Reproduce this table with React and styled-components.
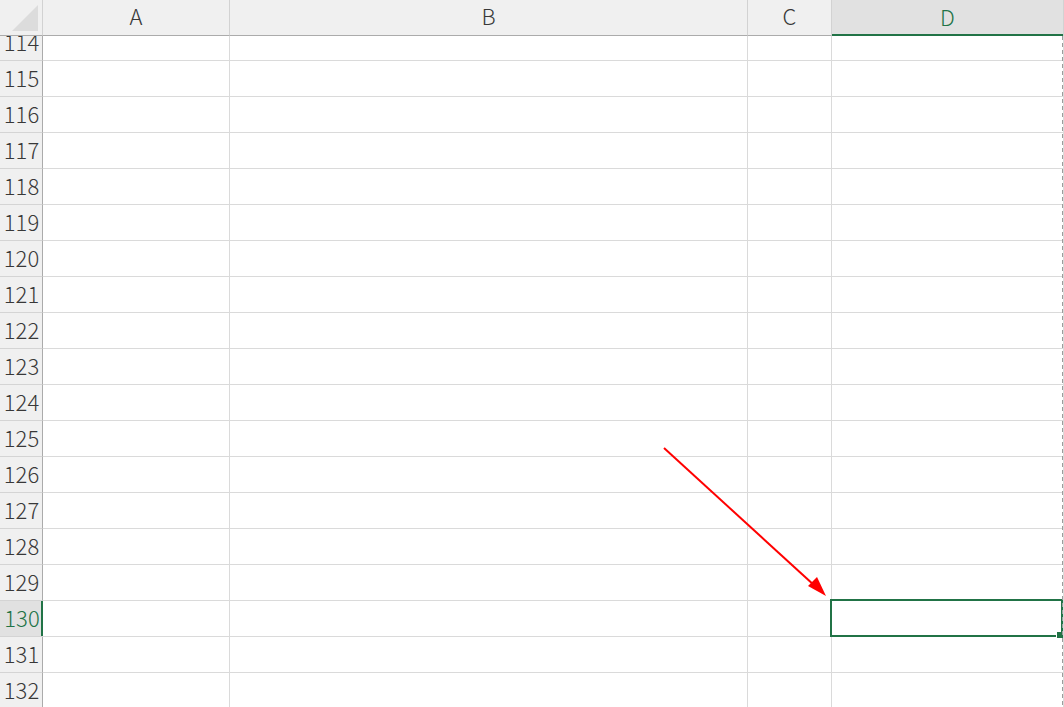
import React from 'react'
import styled, { createGlobalStyle, css } from 'styled-components'

const GlobalStyle = createGlobalStyle`
  html, body {
    margin: 0;
    padding: 0;
    background: #ffffff;
    overflow: hidden;
  }
`

const COLS = '43px 187px 518px 84px 1fr'
const GREEN = '#217346'

const Sheet = styled.div`
  position: relative;
  width: 1064px;
  height: 707px;
  overflow: hidden;
  background: #ffffff;
  font-family: "Noto Sans CJK JP", "Noto Sans", sans-serif;
  font-weight: 300;
  line-height: 24px;
`

const HeaderRow = styled.div`
  position: relative;
  z-index: 2;
  display: grid;
  grid-template-columns: ${COLS};
  grid-template-rows: 36px;
  height: 36px;
  background: #f0f0f0;
`

const Corner = styled.div`
  position: relative;
  box-sizing: border-box;
  border-right: 1px solid #d2d2d2;
  border-bottom: 1px solid #ababab;
  &::before {
    content: '';
    position: absolute;
    left: 12px;
    top: 5px;
    width: 26px;
    height: 26px;
    background: #dcdcdc;
    clip-path: polygon(100% 0, 100% 100%, 0 100%);
  }
`

const ColHead = styled.div`
  box-sizing: border-box;
  display: flex;
  align-items: center;
  justify-content: center;
  border-right: 1px solid #d2d2d2;
  border-bottom: 1px solid #ababab;
  font-size: 22px;
  color: #383838;
  padding-bottom: 5px;
  ${p => p.$active && css`
    background: #e1e1e1;
    color: ${GREEN};
    border-bottom: none;
    box-shadow: inset 0 -2px 0 ${GREEN};
  `}
`

const Body = styled.div`
  height: 671px;
  overflow: hidden;
`

const Rows = styled.div`
  margin-top: -11px;
`

const Row = styled.div`
  display: grid;
  grid-template-columns: ${COLS};
  grid-template-rows: 36px;
  height: 36px;
`

const RowHead = styled.div`
  box-sizing: border-box;
  display: flex;
  align-items: center;
  justify-content: center;
  background: #f0f0f0;
  border-right: 1px solid #ababab;
  border-bottom: 1px solid #d4d4d4;
  font-size: 22px;
  color: #383838;
  padding-left: 1px;
  padding-bottom: 4px;
  ${p => p.$active && css`
    background: #e1e1e1;
    color: ${GREEN};
    border-right: none;
    box-shadow: inset -2px 0 0 ${GREEN};
  `}
`

const Cell = styled.div`
  position: relative;
  box-sizing: border-box;
  border-right: 1px solid #dadada;
  border-bottom: 1px solid #dadada;
  ${p => p.$selected && css`
    &::after {
      content: '';
      position: absolute;
      z-index: 1;
      top: -2px;
      left: -2px;
      right: 0;
      bottom: -1px;
      border: 2px solid ${GREEN};
    }
    &::before {
      content: '';
      position: absolute;
      z-index: 2;
      right: 0;
      bottom: -2px;
      width: 6px;
      height: 6px;
      background: ${GREEN};
      box-shadow: -1px 0 0 #ffffff;
    }
  `}
`

const PageBreak = styled.div`
  position: absolute;
  z-index: 3;
  top: 36px;
  bottom: 0;
  left: 1062px;
  width: 1px;
  background: repeating-linear-gradient(to bottom, #9c9c9c 0 4px, transparent 4px 7px);
`

const Arrow = styled.svg`
  position: absolute;
  z-index: 4;
  left: 0;
  top: 0;
  pointer-events: none;
`

const columns = ['A', 'B', 'C', 'D']
const rows = Array.from({ length: 20 }, (_, i) => 114 + i)

export default function App() {
  return (
    <Sheet>
      <GlobalStyle />
      <HeaderRow>
        <Corner />
        {columns.map(c => (
          <ColHead key={c} $active={c === 'D'}>{c}</ColHead>
        ))}
      </HeaderRow>
      <Body>
        <Rows>
          {rows.map(n => (
            <Row key={n}>
              <RowHead $active={n === 130}>{n}</RowHead>
              {columns.map(c => (
                <Cell key={c} $selected={n === 130 && c === 'D'} />
              ))}
            </Row>
          ))}
        </Rows>
      </Body>
      <PageBreak />
      <Arrow width="1064" height="707" viewBox="0 0 1064 707">
        <line x1="664" y1="448" x2="815" y2="586" stroke="#ff0000" strokeWidth="2" />
        <polygon points="826,596 808,586 817,577" fill="#ff0000" />
      </Arrow>
    </Sheet>
  )
}
